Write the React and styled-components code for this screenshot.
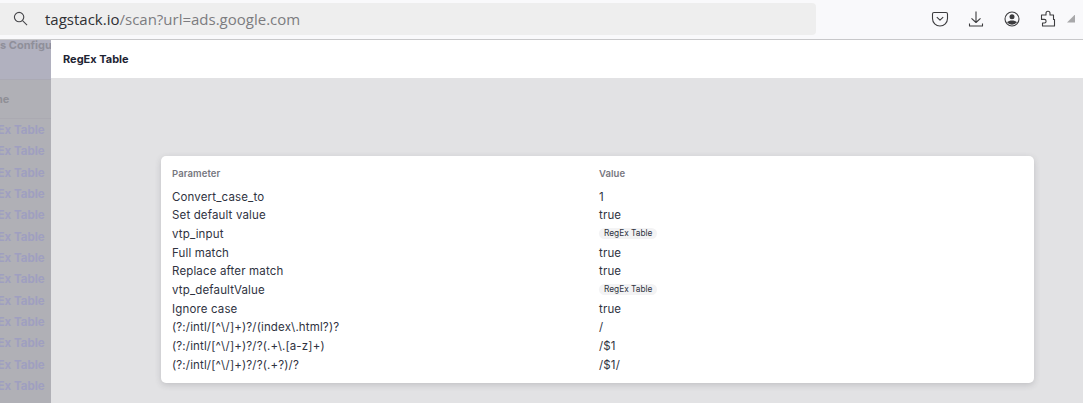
import React from 'react';
import styled, { createGlobalStyle } from 'styled-components';

const GlobalStyle = createGlobalStyle`
    html, body {
        margin: 0;
        padding: 0;
        overflow: hidden;
    }
    body {
        font-family: "Inter", "Liberation Sans", sans-serif;
        background: #e2e2e4;
    }
`

const rows = [
    { name: 'Convert_case_to', value: '1' },
    { name: 'Set default value', value: 'true' },
    { name: 'vtp_input', tag: 'RegEx Table' },
    { name: 'Full match', value: 'true' },
    { name: 'Replace after match', value: 'true' },
    { name: 'vtp_defaultValue', tag: 'RegEx Table' },
    { name: 'Ignore case', value: 'true' },
    { name: '(?:/intl/[^\\/]+)?/(index\\.html?)?', value: '/' },
    { name: '(?:/intl/[^\\/]+)?/?(.+\\.[a-z]+)', value: '/$1' },
    { name: '(?:/intl/[^\\/]+)?/?(.+?)/?', value: '/$1/' },
];

const sideRows = Array.from({ length: 13 });

const App = () => {
    return (
        <Page>
            <GlobalStyle />
            <BrowserBar>
                <AddressField>
                    <SearchIcon viewBox="0 0 16 16">
                        <circle cx="6.500" cy="6.500" r="5" />
                        <path d="M10.200 10.200L15 15" />
                    </SearchIcon>
                    <AddressText>
                        <Host>tagstack.io</Host>/scan?url=ads.google.com
                    </AddressText>
                </AddressField>
                <Tools>
                    <ToolIcon viewBox="0 0 20 20">
                        <path d="M4 3.500h12A1.500 1.500 0 0 1 17.500 5v4.500a7.500 7.500 0 0 1-15 0V5A1.500 1.500 0 0 1 4 3.500z" />
                        <path d="M6.800 8.200L10 11.200l3.200-3" />
                    </ToolIcon>
                    <ToolIcon viewBox="0 0 20 20">
                        <path d="M10 2.500v11M5.500 9.300L10 13.500l4.500-4.200" />
                        <path d="M3.500 14.500v2.500h13v-2.500" />
                    </ToolIcon>
                    <ToolIcon viewBox="0 0 20 20">
                        <circle cx="10" cy="10" r="7" />
                        <circle cx="10" cy="7.800" r="2.500" fill="#3c3c3e" stroke="none" />
                        <path d="M5 13.300c1.200-1.300 3-1.800 5-1.800s3.800.5 5 1.800a6.500 6.500 0 0 1-10 0z" fill="#3c3c3e" stroke="none" />
                    </ToolIcon>
                    <ToolIcon viewBox="0 0 20 20">
                        <path d="M3.500 6H8V4.300a2 2 0 0 1 4 0V6h3.500v4.500h1V17h-12v-3h1.800a1.800 1.800 0 0 0 0-3.600H3.500z" />
                    </ToolIcon>
                </Tools>
                <MenuSliver />
            </BrowserBar>
            <Viewport>
                <DimmedSidebar>
                    <SideHeading>s Configuration</SideHeading>
                    <SideName>Name</SideName>
                    {sideRows.map((_, i) => (
                        <SideRow key={i}>RegEx Table</SideRow>
                    ))}
                </DimmedSidebar>
                <Panel>
                    <PanelHeader>RegEx Table</PanelHeader>
                    <PanelBody>
                        <Card>
                            <Grid>
                                <HeadCell>Parameter</HeadCell>
                                <HeadCell>Value</HeadCell>
                                {rows.map(row => (
                                    <React.Fragment key={row.name}>
                                        <Cell>{row.name}</Cell>
                                        <Cell>{row.tag ? <Tag>{row.tag}</Tag> : row.value}</Cell>
                                    </React.Fragment>
                                ))}
                            </Grid>
                        </Card>
                    </PanelBody>
                </Panel>
            </Viewport>
        </Page>
    )
}

const Page = styled.div`
    width: 1083px;
    height: 403px;
    display: flex;
    flex-direction: column;
    overflow: hidden;
`

const BrowserBar = styled.header`
    height: 40px;
    flex: none;
    box-sizing: border-box;
    display: flex;
    align-items: center;
    padding-bottom: 2px;
    background: #f9f9fb;
    border-bottom: 1px solid #c8c8ca;
    overflow: hidden;
`

const AddressField = styled.div`
    width: 816px;
    height: 32px;
    flex: none;
    box-sizing: border-box;
    display: flex;
    align-items: center;
    padding-left: 13px;
    border-radius: 0 4px 4px 0;
    background: #eeeeee;
`

const SearchIcon = styled.svg`
    width: 15px;
    height: 15px;
    flex: none;
    fill: none;
    stroke: #46464a;
    stroke-width: 1.200;
`

const AddressText = styled.div`
    margin-left: 17px;
    color: #7c7c80;
    font-family: "Open Sans", sans-serif;
    font-size: 15px;
`

const Host = styled.span`
    color: #303034;
`

const Tools = styled.div`
    margin-left: 114px;
    display: flex;
    align-items: center;
    gap: 16px;
`

const ToolIcon = styled.svg`
    width: 20px;
    height: 20px;
    fill: none;
    stroke: #3c3c3e;
    stroke-width: 1.100;
    stroke-linejoin: round;
`

const MenuSliver = styled.div`
    width: 8px;
    height: 8px;
    margin-left: 9px;
    background: #a8a8aa;
    clip-path: polygon(100% 0, 100% 100%, 0 100%);
`

const Viewport = styled.main`
    flex: 1;
    min-height: 0;
    display: flex;
`

const DimmedSidebar = styled.aside`
    width: 51px;
    flex: none;
    display: flex;
    flex-direction: column;
    overflow: hidden;
    background: #b0b0b6;
    font-weight: 700;
    font-size: 11px;
    white-space: nowrap;
`

const SideHeading = styled.div`
    height: 40px;
    flex: none;
    box-sizing: border-box;
    color: #8f8f9a;
    line-height: 11px;
    background: #b1b1bf;
    border-bottom: 1px solid #abaab4;
`

const SideName = styled.div`
    height: 39px;
    flex: none;
    box-sizing: border-box;
    padding-top: 12px;
    color: #8f8f96;
    text-indent: -22px;
    border-bottom: 1px solid #abaab2;
`

const SideRow = styled.div`
    height: 21.350px;
    flex: none;
    line-height: 23px;
    color: #9f9fc0;
    text-indent: -24px;
    font-size: 11.500px;
`

const Panel = styled.section`
    flex: 1;
    min-width: 0;
    display: flex;
    flex-direction: column;
`

const PanelHeader = styled.div`
    height: 38px;
    flex: none;
    box-sizing: border-box;
    padding-left: 12px;
    line-height: 38px;
    background: #ffffff;
    color: #1e2433;
    font-weight: 700;
    font-size: 11px;
`

const PanelBody = styled.div`
    flex: 1;
    padding: 78px 49px 0 110px;
`

const Card = styled.div`
    height: 227px;
    box-sizing: border-box;
    padding: 11px 11px 0;
    background: #ffffff;
    border-radius: 5px;
    box-shadow: 0 2px 6px rgba(60, 60, 70, 0.2);
`

const Grid = styled.div`
    display: grid;
    grid-template-columns: 427px 1fr;
    grid-template-rows: 20.600px;
    grid-auto-rows: 18.700px;
`

const HeadCell = styled.div`
    color: #77777f;
    font-size: 9.500px;
    font-weight: 600;
    line-height: 14px;
    letter-spacing: 0.1px;
`

const Cell = styled.div`
    color: #30333f;
    font-size: 11.500px;
    line-height: 18.700px;
    letter-spacing: 0.15px;
    white-space: nowrap;
`

const Tag = styled.span`
    display: inline-block;
    vertical-align: top;
    height: 11px;
    margin-top: 3px;
    padding: 0 5px;
    border-radius: 6px;
    background: #f3f3f4;
    color: #30333f;
    font-size: 8.300px;
    line-height: 11px;
    letter-spacing: 0;
`

export default App;
